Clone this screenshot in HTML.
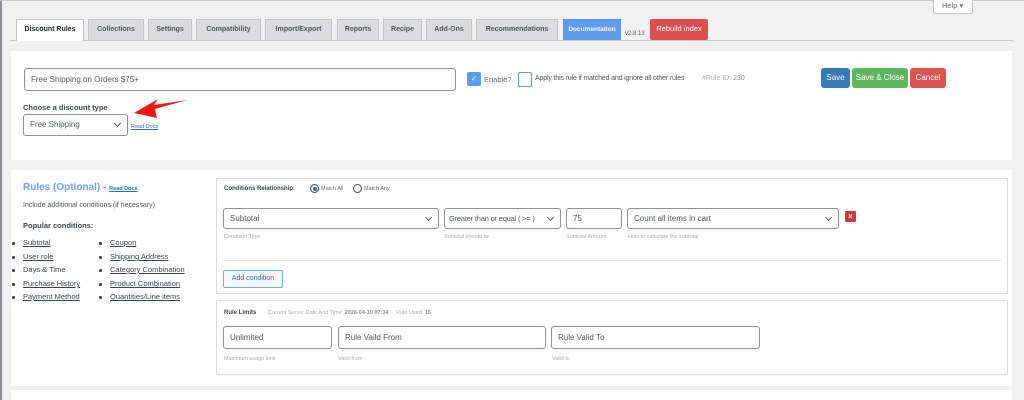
<!DOCTYPE html>
<html><head><style>
*{box-sizing:border-box;margin:0;padding:0}
html,body{width:1024px;height:400px;overflow:hidden}
body{background:#f0f0f1;font-family:"Liberation Sans",sans-serif;font-size:8px;color:#3c434a;position:relative}
.a{position:absolute}
.tab{position:absolute;top:19px;height:21px;background:#dcdcde;border:1px solid #c3c4c7;border-bottom:none;font-weight:bold;font-size:7px;color:#50575e;text-align:center;line-height:20px;white-space:nowrap;overflow:hidden}
.inp{position:absolute;background:#fff;border:1px solid #8c8f94;border-radius:3px;font-size:8px;color:#50575e;padding-left:6px;line-height:20px;white-space:nowrap;overflow:hidden}
.sel:after{content:"";position:absolute;right:7px;top:6px;width:4px;height:4px;border-right:1.3px solid #50575e;border-bottom:1.3px solid #50575e;transform:rotate(45deg)}
.lbl{position:absolute;font-size:5.5px;color:#a7aaad;white-space:nowrap}
.btn{position:absolute;top:68px;height:20px;color:#fff;border-radius:3px;font-size:8px;text-align:center;line-height:19px;white-space:nowrap}
ul{list-style:none}
li{position:absolute;text-decoration:underline;font-size:7.5px;color:#3c434a;white-space:nowrap}
li:before{content:"";position:absolute;left:-11px;top:4px;width:2.5px;height:2.5px;border-radius:50%;background:#3c434a}
</style></head><body>
<div class="a" style="left:0;top:0;width:2px;height:400px;background:#8c8f94"></div>
<div class="a" style="left:0;top:0;width:1024px;height:1px;background:#c3c4c7"></div>
<div class="a" style="left:933px;top:0;width:40px;height:14px;background:#fff;border:1px solid #c3c4c7;border-top:none;border-radius:0 0 3px 3px;font-size:7.5px;color:#646970;line-height:11px;padding-left:8px">Help ▾</div>
<div class="a" style="left:10px;top:40px;width:1003px;height:1px;background:#c3c4c7"></div>
<div class="tab" style="left:16px;width:68px;background:#fff;color:#1d2327;height:22px">Discount Rules</div>
<div class="tab" style="left:88px;width:56px">Collections</div>
<div class="tab" style="left:148px;width:44px">Settings</div>
<div class="tab" style="left:196px;width:65px">Compatibility</div>
<div class="tab" style="left:265px;width:67px">Import/Export</div>
<div class="tab" style="left:337px;width:42px">Reports</div>
<div class="tab" style="left:383px;width:39px">Recipe</div>
<div class="tab" style="left:426px;width:46px">Add-Ons</div>
<div class="tab" style="left:476px;width:82px">Recommendations</div>
<div class="tab" style="left:563px;width:58px;background:#5b9cf0;color:#fff;border-color:#5b9cf0;font-size:6.5px">Documentation</div>
<div class="a" style="left:625px;top:31px;font-size:6px;color:#50575e">v2.8.13</div>
<div class="a" style="left:650px;top:19px;width:58px;height:21px;background:#e04d4d;color:#fff;border-radius:2px;text-align:center;line-height:20px;font-size:7.5px">Rebuild index</div>

<div class="a" style="left:11px;top:51px;width:1001px;height:109px;background:#fff"></div>
<div class="inp" style="left:24px;top:68px;width:432px;height:23px;line-height:21px">Free Shipping on Orders $75+</div>
<div class="a" style="left:467px;top:72px;width:14px;height:14px;background:#5b9cf0;border-radius:2px;color:#fff;font-size:8px;text-align:center;line-height:14px">✓</div>
<div class="a" style="left:484px;top:75px;font-size:7.5px;color:#646970">Enable?</div>
<div class="a" style="left:518px;top:72px;width:14px;height:15px;border:1px solid #5b9cf0;border-radius:2px;background:#fff"></div>
<div class="a" style="left:535px;top:75px;font-size:7px;color:#50575e;letter-spacing:-0.15px;white-space:nowrap">Apply this rule if matched and ignore all other rules</div>
<div class="a" style="left:702px;top:75px;font-size:7px;color:#a7aaad">#Rule ID: <span style="color:#8c8f94">230</span></div>
<div class="btn" style="left:821px;width:29px;background:#337ab7">Save</div>
<div class="btn" style="left:852px;width:56px;background:#5cb85c">Save &amp; Close</div>
<div class="btn" style="left:910px;width:36px;background:#d9534f">Cancel</div>
<div class="a" style="left:23px;top:103px;font-size:7.5px;font-weight:bold;color:#3c434a">Choose a discount type</div>
<div class="inp sel" style="left:23px;top:114px;width:105px;height:22px">Free Shipping</div>
<div class="a" style="left:131px;top:124px;font-size:5.5px;color:#2271b1;text-decoration:underline">Read Docs</div>
<svg class="a" style="left:0;top:0" width="1024" height="400"><polygon points="134,113 158,99 154,105 187,100 155,109 157,118" fill="#f01818"/><polygon points="215,212 196,204 203,199 186,173 209,194 211,188" fill="#f01818"/></svg>

<div class="a" style="left:11px;top:170px;width:1001px;height:216px;background:#fff"></div>
<div class="a" style="left:11px;top:390px;width:1001px;height:20px;background:#fff"></div>
<div class="a" style="left:23px;top:182px;font-size:10px;font-weight:bold;color:#6f9ff5;white-space:nowrap">Rules (Optional) - <span style="font-size:5.5px;color:#2271b1;text-decoration:underline">Read Docs</span></div>
<div class="a" style="left:23px;top:202px;font-size:7px;color:#50575e">Include additional conditions (if necessary)</div>
<div class="a" style="left:23px;top:221px;font-size:7.5px;font-weight:bold;color:#3c434a">Popular conditions:</div>
<ul>
<li style="left:23px;top:238px">Subtotal</li><li style="left:23px;top:252px">User role</li><li style="left:23px;top:265px;text-decoration:none">Days &amp; Time</li><li style="left:23px;top:279px">Purchase History</li><li style="left:23px;top:292px">Payment Method</li>
<li style="left:110px;top:238px">Coupon</li><li style="left:110px;top:252px">Shipping Address</li><li style="left:110px;top:265px">Category Combination</li><li style="left:110px;top:279px">Product Combination</li><li style="left:110px;top:292px">Quantities/Line items</li>
</ul>
<div class="a" style="left:216px;top:178px;width:792px;height:116px;border:1px solid #dcdcde"></div>
<div class="a" style="left:224px;top:186px;font-size:6px;font-weight:bold;color:#3c434a">Conditions Relationship</div>
<div class="a" style="left:310px;top:184px;width:9px;height:9px;border:1px solid #3c434a;border-radius:50%"><div style="margin:1.5px;width:4px;height:4px;border-radius:50%;background:#2271b1"></div></div>
<div class="a" style="left:321px;top:186px;font-size:5.5px;color:#646970">Match All</div>
<div class="a" style="left:353px;top:184px;width:9px;height:9px;border:1px solid #3c434a;border-radius:50%"></div>
<div class="a" style="left:364px;top:186px;font-size:5.5px;color:#646970">Match Any</div>
<div class="inp sel" style="left:223px;top:208px;width:216px;height:21px">Subtotal</div>
<div class="inp sel" style="left:444px;top:208px;width:117px;height:21px;padding-left:4px;font-size:7.5px;letter-spacing:-0.2px">Greater than or equal ( &gt;= )</div>
<div class="inp" style="left:566px;top:208px;width:56px;height:21px">75</div>
<div class="inp sel" style="left:627px;top:208px;width:212px;height:21px">Count all items in cart</div>
<div class="a" style="left:845px;top:211px;width:11px;height:11px;background:#d63638;color:#fff;font-size:8px;font-weight:bold;text-align:center;line-height:11px;border-radius:1px">×</div>
<div class="lbl" style="left:224px;top:234px">Condition Type</div>
<div class="lbl" style="left:444px;top:234px">Subtotal should be</div>
<div class="lbl" style="left:566px;top:234px">Subtotal Amount</div>
<div class="lbl" style="left:628px;top:234px">How to calculate the subtotal</div>
<div class="a" style="left:223px;top:260px;width:778px;height:1px;background:#dcdcde"></div>
<div class="a" style="left:223px;top:270px;width:60px;height:18px;border:1px solid #72aee6;background:#f6f7f7;border-radius:2px;font-size:7px;color:#2271b1;text-align:center;line-height:16px">Add condition</div>
<div class="a" style="left:216px;top:300px;width:792px;height:75px;border:1px solid #dcdcde"></div>
<div class="a" style="left:224px;top:310px;font-size:6px;font-weight:bold;color:#3c434a">Rule Limits</div>
<div class="a" style="left:268px;top:310px;font-size:5.5px;color:#a7aaad;white-space:nowrap">Current Server Date And Time: <b style="color:#8c8f94">2026-04-10 07:34</b> &nbsp; &nbsp; Rule Used: <b style="color:#8c8f94">15</b></div>
<div class="inp" style="left:223px;top:326px;width:109px;height:23px;line-height:21px">Unlimited</div>
<div class="inp" style="left:338px;top:326px;width:208px;height:23px;line-height:21px">Rule Vaild From</div>
<div class="inp" style="left:551px;top:326px;width:209px;height:23px;line-height:21px">Rule Valid To</div>
<div class="lbl" style="left:224px;top:356px">Maximum usage limit</div>
<div class="lbl" style="left:338px;top:356px">Vaild from</div>
<div class="lbl" style="left:552px;top:356px">Vaild to</div>
</body></html>
